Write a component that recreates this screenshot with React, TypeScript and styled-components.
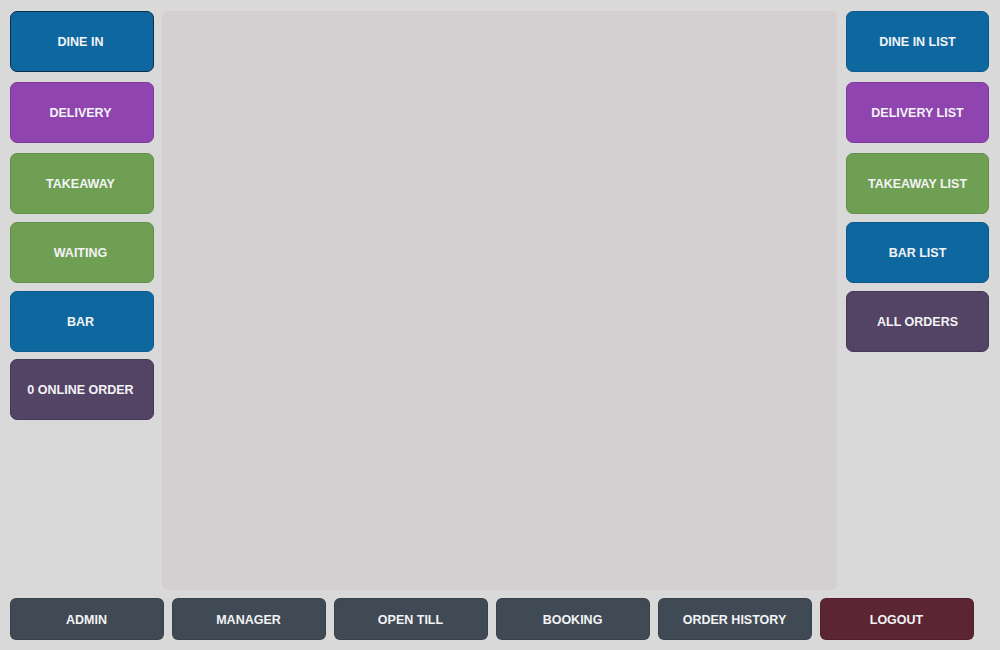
import React from "react";
import styled, { createGlobalStyle } from "styled-components";

const Global = createGlobalStyle`
  html, body { margin: 0; padding: 0; background: #d9d9d9; }
  body { font-family: "Liberation Sans", Arial, sans-serif; }
`;

const Page = styled.div`
  width: 1000px;
  height: 650px;
  box-sizing: border-box;
  padding: 11px 11px 10px 10px;
  display: grid;
  grid-template-columns: 144px 1fr 144px;
  grid-template-rows: 1fr 42px;
  column-gap: 8px;
  row-gap: 8px;
  background: #d9d9d9;
`;

const Column = styled.div`
  display: flex;
  flex-direction: column;
`;

const RightColumn = styled(Column)`
  margin-left: 1px;
`;

const Canvas = styled.div`
  background: #d4d0d1;
  border-radius: 6px;
`;

const SideButton = styled.button<{ $bg: string; $border: string; $gap: number; $shift: number }>`
  height: 61px;
  flex: 0 0 auto;
  margin-bottom: ${(p) => p.$gap}px;
  background: ${(p) => p.$bg};
  border: 1px solid ${(p) => p.$border};
  border-radius: 7px;
  color: #f3f3f6;
  font-family: "Liberation Sans", Arial, sans-serif;
  font-weight: 700;
  font-size: 12.5px;
  text-transform: uppercase;
  cursor: pointer;
  padding: 0 ${(p) => p.$shift}px 0 0;
`;

const BottomBar = styled.div`
  grid-column: 1 / 4;
  display: flex;
  gap: 8px;
`;

const BottomButton = styled.button<{ $bg: string }>`
  width: 154px;
  height: 42px;
  background: ${(p) => p.$bg};
  border: 1px solid rgba(0, 0, 0, 0.12);
  border-radius: 6px;
  color: #f3f3f6;
  font-family: "Liberation Sans", Arial, sans-serif;
  font-weight: 700;
  font-size: 12.5px;
  cursor: pointer;
  padding: 2px 1px 0 0;
`;

const C = {
  blue: ["#0f67a0", "#0d5a8c"],
  purple: ["#9044b0", "#7f3b9c"],
  green: ["#6f9f53", "#62904a"],
  plum: ["#534364", "#463857"],
};

const left: [string, string[], number][] = [
  ["Dine In", C.blue, 10],
  ["Delivery", C.purple, 10],
  ["Takeaway", C.green, 8],
  ["Waiting", C.green, 8],
  ["Bar", C.blue, 7],
  ["0 Online Order", C.plum, 0],
];

const right: [string, string[], number][] = [
  ["Dine In List", C.blue, 10],
  ["Delivery List", C.purple, 10],
  ["Takeaway List", C.green, 8],
  ["Bar List", C.blue, 8],
  ["All Orders", C.plum, 0],
];

const bottom: [string, string][] = [
  ["ADMIN", "#404a54"],
  ["MANAGER", "#404a54"],
  ["OPEN TILL", "#404a54"],
  ["BOOKING", "#404a54"],
  ["ORDER HISTORY", "#404a54"],
  ["LOGOUT", "#5c2533"],
];

export default function App() {
  return (
    <>
      <Global />
      <Page>
        <Column>
          {left.map(([label, [bg, bd], gap], i) => (
            <SideButton
              key={label}
              $bg={bg}
              $border={i === 0 ? "#0a2f48" : bd}
              $gap={gap}
              $shift={3}
            >
              {label}
            </SideButton>
          ))}
        </Column>
        <Canvas />
        <RightColumn>
          {right.map(([label, [bg, bd], gap]) => (
            <SideButton key={label} $bg={bg} $border={bd} $gap={gap} $shift={0}>
              {label}
            </SideButton>
          ))}
        </RightColumn>
        <BottomBar>
          {bottom.map(([label, bg]) => (
            <BottomButton key={label} $bg={bg}>
              {label}
            </BottomButton>
          ))}
        </BottomBar>
      </Page>
    </>
  );
}
